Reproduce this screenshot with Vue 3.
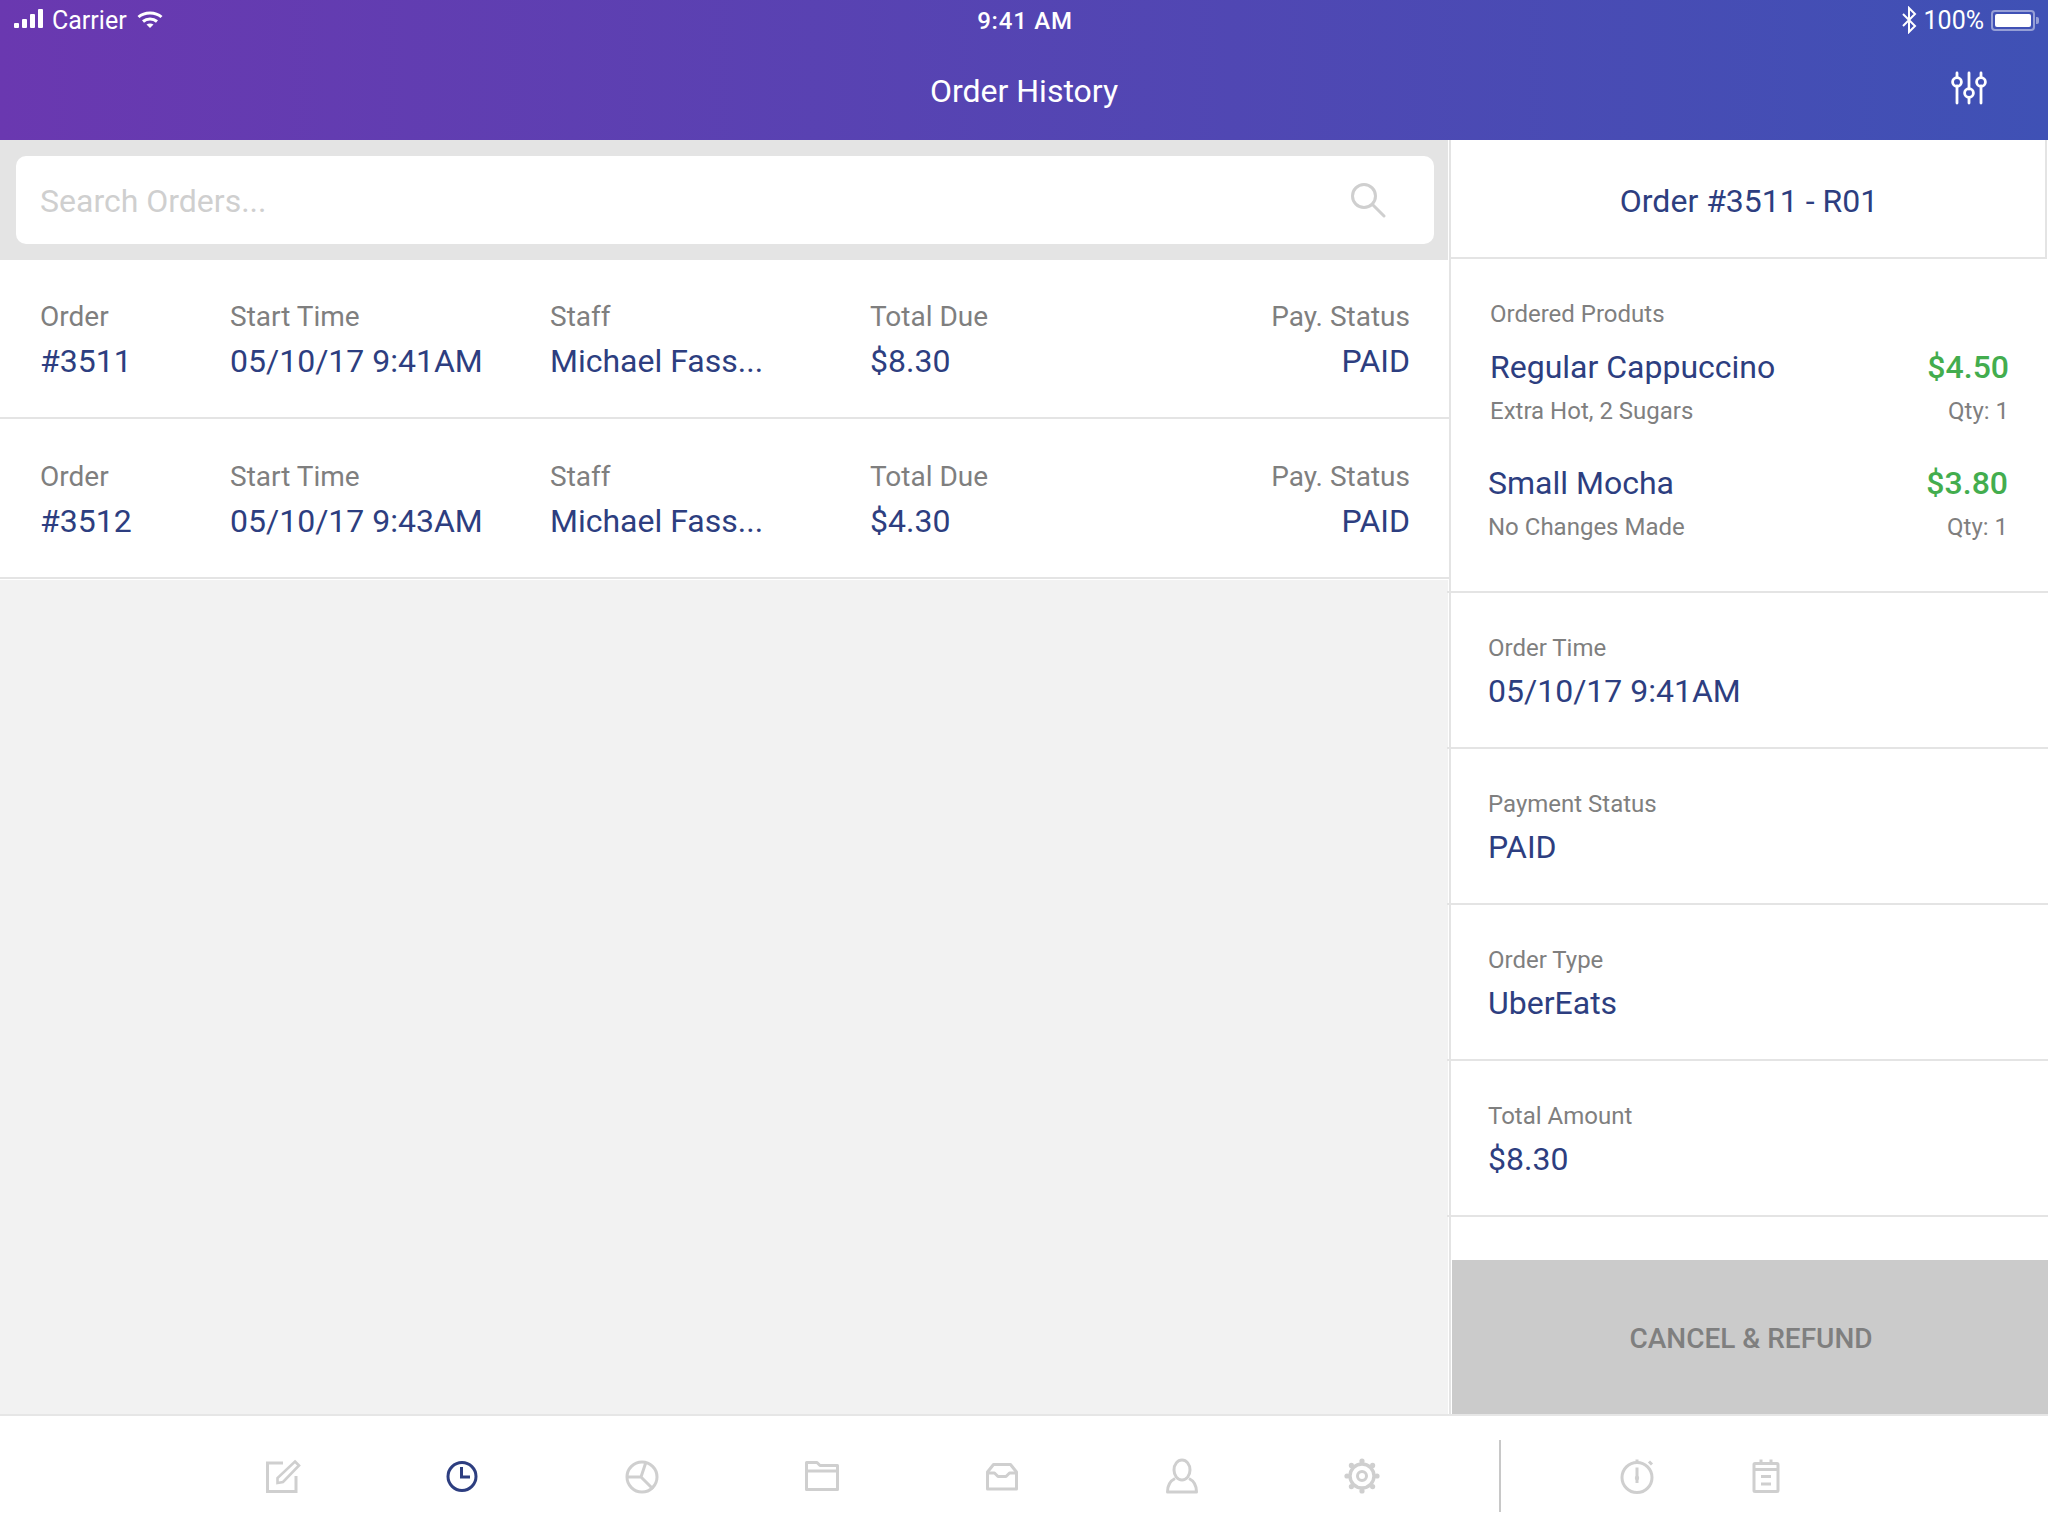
<script setup>
const orders = [
  { id: '#3511', time: '05/10/17 9:41AM', staff: 'Michael Fass...', total: '$8.30', status: 'PAID' },
  { id: '#3512', time: '05/10/17 9:43AM', staff: 'Michael Fass...', total: '$4.30', status: 'PAID' }
]
const products = [
  { name: 'Regular Cappuccino', price: '$4.50', note: 'Extra Hot, 2 Sugars', qty: 'Qty: 1', cls: 'first' },
  { name: 'Small Mocha', price: '$3.80', note: 'No Changes Made', qty: 'Qty: 1', cls: 'second' }
]
const facts = [
  { label: 'Order Time', value: '05/10/17 9:41AM' },
  { label: 'Payment Status', value: 'PAID' },
  { label: 'Order Type', value: 'UberEats' },
  { label: 'Total Amount', value: '$8.30' }
]
</script>

<template>
  <div class="screen">
    <header class="top">
      <div class="status">
        <div class="status-left">
          <svg class="signal" width="30" height="20" viewBox="0 0 30 20" fill="#fff">
            <rect x="0" y="14" width="5" height="5" rx="1" />
            <rect x="8" y="10" width="5" height="9" rx="1" />
            <rect x="16" y="5" width="5" height="14" rx="1" />
            <rect x="24" y="0" width="5" height="19" rx="1" />
          </svg>
          <span class="carrier">Carrier</span>
          <svg class="wifi" width="26" height="18" viewBox="0 0 26 18" fill="none" stroke="#fff" stroke-width="3">
            <path d="M1.5 6 C7.5 .5 18.5 .5 24.5 6" />
            <path d="M6 10.5 C10 7 16 7 20 10.5" />
            <path d="M9.5 13.5 L13 17 L16.5 13.5 C14.5 12 11.5 12 9.5 13.5 Z" fill="#fff" stroke="none" />
          </svg>
        </div>
        <div class="clock">9:41 AM</div>
        <div class="status-right">
          <svg width="16" height="28" viewBox="0 0 16 28" fill="none" stroke="#fff" stroke-width="2">
            <path d="M2 8 L14 20 L8 26 V2 L14 8 L2 20" />
          </svg>
          <span class="pct">100%</span>
          <div class="battery"><div class="battery-fill"></div></div>
          <div class="battery-tip"></div>
        </div>
      </div>
      <div class="titlebar">
        <h1 class="title">Order History</h1>
        <svg class="filter" width="38" height="34" viewBox="0 0 38 34" fill="none" stroke="#fff" stroke-width="2.8" stroke-linecap="round">
          <path d="M7 2 V6 M7 15 V32 M19 2 V18 M19 27 V32 M31 2 V6 M31 15 V32" />
          <circle cx="7" cy="11" r="4.4" />
          <circle cx="19" cy="22" r="4.4" />
          <circle cx="31" cy="11" r="4.4" />
        </svg>
      </div>
    </header>

    <main class="body">
      <section class="list">
        <div class="search-band">
          <div class="search-box">
            <span class="placeholder">Search Orders...</span>
            <svg width="38" height="38" viewBox="0 0 38 38" fill="none" stroke="#cfcfcf" stroke-width="3" stroke-linecap="round">
              <circle cx="16" cy="15" r="11.5" />
              <path d="M24.5 23.5 L36 35" />
            </svg>
          </div>
        </div>
        <div class="rows">
          <div v-for="o in orders" :key="o.id" class="row">
            <div class="cell"><span class="lbl">Order</span><span class="val">{{ o.id }}</span></div>
            <div class="cell"><span class="lbl">Start Time</span><span class="val">{{ o.time }}</span></div>
            <div class="cell"><span class="lbl">Staff</span><span class="val">{{ o.staff }}</span></div>
            <div class="cell"><span class="lbl">Total Due</span><span class="val">{{ o.total }}</span></div>
            <div class="cell end"><span class="lbl">Pay. Status</span><span class="val">{{ o.status }}</span></div>
          </div>
        </div>
        <div class="fill"></div>
      </section>

      <aside class="detail">
        <div class="detail-head">Order #3511 - R01</div>
        <div class="products">
          <div class="products-title">Ordered Produts</div>
          <div v-for="p in products" :key="p.name" class="product" :class="p.cls">
            <div class="pline"><span class="pname">{{ p.name }}</span><span class="pprice">{{ p.price }}</span></div>
            <div class="pline sub"><span>{{ p.note }}</span><span>{{ p.qty }}</span></div>
          </div>
        </div>
        <div v-for="f in facts" :key="f.label" class="fact">
          <span class="lbl small">{{ f.label }}</span>
          <span class="val">{{ f.value }}</span>
        </div>
        <div class="spacer"></div>
        <button class="refund">CANCEL &amp; REFUND</button>
      </aside>
    </main>

    <nav class="tabs">
      <div class="tab">
        <svg width="40" height="40" viewBox="0 0 40 40" fill="none" stroke="#cfcfcf" stroke-width="3">
          <path d="M21 7 H5.5 V35.5 H34 V20" />
          <path d="M33 5.5 L37 9.5 L21 26 L15.5 27 L15.5 22 Z" stroke-width="2.6" />
        </svg>
      </div>
      <div class="tab">
        <svg width="40" height="40" viewBox="0 0 40 40" fill="none" stroke="#2d3e80" stroke-width="3">
          <circle cx="20" cy="20.5" r="14" />
          <path d="M19.5 11 V21 H28" />
        </svg>
      </div>
      <div class="tab">
        <svg width="40" height="40" viewBox="0 0 40 40" fill="none" stroke="#cfcfcf" stroke-width="3">
          <circle cx="20" cy="21" r="15" />
          <path d="M5 21 H19 L24 6 M19 21 L31 33" />
        </svg>
      </div>
      <div class="tab">
        <svg width="40" height="40" viewBox="0 0 40 40" fill="none" stroke="#cfcfcf" stroke-width="3" stroke-linejoin="round">
          <path d="M4.5 6.5 H15 L18 9.5 H35.5 V33.5 H4.5 Z" />
          <path d="M4.5 15 H35.5" />
        </svg>
      </div>
      <div class="tab">
        <svg width="40" height="40" viewBox="0 0 40 40" fill="none" stroke="#cfcfcf" stroke-width="3" stroke-linejoin="round">
          <path d="M5.5 16 L11.5 8.5 H28.5 L34.5 16 V33 H5.5 Z" />
          <path d="M5.5 17 H12.5 L16 20.5 H24 L27.5 17 H34.5" />
        </svg>
      </div>
      <div class="tab">
        <svg width="40" height="40" viewBox="0 0 40 40" fill="none" stroke="#cfcfcf" stroke-width="3" stroke-linejoin="round">
          <ellipse cx="20" cy="14" rx="8" ry="10" />
          <path d="M13 22.5 C8 25 5.5 29 5.5 36 H34.5 C34.5 29 32 25 27 22.5" />
        </svg>
      </div>
      <div class="tab">
        <svg width="40" height="40" viewBox="0 0 40 40" fill="none" stroke="#cfcfcf" stroke-width="3.4">
          <circle cx="20" cy="20" r="12" />
          <circle cx="20" cy="20" r="4.5" stroke-width="3" />
          <g fill="#cfcfcf" stroke="none">
            <circle cx="20" cy="5" r="2.6" /><circle cx="20" cy="35" r="2.6" />
            <circle cx="5" cy="20" r="2.6" /><circle cx="35" cy="20" r="2.6" />
            <circle cx="9.4" cy="9.4" r="2.6" /><circle cx="30.6" cy="9.4" r="2.6" />
            <circle cx="9.4" cy="30.6" r="2.6" /><circle cx="30.6" cy="30.6" r="2.6" />
          </g>
        </svg>
      </div>
      <div class="divider"></div>
      <div class="tab small-tab watch">
        <svg width="40" height="40" viewBox="0 0 40 40" fill="none" stroke="#cfcfcf" stroke-width="3">
          <circle cx="20" cy="21.5" r="15" />
          <path d="M20 11.5 V27 M20 3.5 V6 M32 5.5 L35 8.5" />
          <circle cx="20" cy="22" r="2.2" fill="#cfcfcf" stroke="none" />
        </svg>
      </div>
      <div class="tab small-tab">
        <svg width="40" height="40" viewBox="0 0 40 40" fill="none" stroke="#cfcfcf" stroke-width="3">
          <rect x="8" y="7.5" width="24" height="28" rx="1" />
          <path d="M8 13.5 H32 M15 3.5 V9 M25 3.5 V9" />
          <path d="M15 20.5 H25 M15 28 H25" />
        </svg>
      </div>
    </nav>
  </div>
</template>

<style>
html, body { margin: 0; padding: 0; }
</style>

<style scoped>
.screen {
  width: 2048px;
  height: 1536px;
  display: flex;
  flex-direction: column;
  font-family: Roboto, "Liberation Sans", sans-serif;
  background: #fff;
  overflow: hidden;
}
.top {
  height: 140px;
  flex: none;
  background: linear-gradient(90deg, #6a38b0 0%, #3f51b5 100%);
  color: #fff;
  display: flex;
  flex-direction: column;
}
.status {
  height: 40px;
  display: grid;
  grid-template-columns: 1fr auto 1fr;
  align-items: center;
  padding: 0 9px 0 14px;
  font-size: 25px;
}
.status-left { display: flex; align-items: center; }
.signal { margin-top: -2px; }
.carrier { margin-left: 8px; }
.wifi { margin-left: 10px; margin-top: -1px; }
.clock { font-weight: 500; font-size: 24px; letter-spacing: 0.8px; padding-top: 2px; margin-left: -3px; }
.status-right { display: flex; align-items: center; justify-content: flex-end; }
.pct { margin-left: 7px; font-size: 25px; }
.battery {
  margin-left: 7px;
  width: 44px;
  height: 21px;
  box-sizing: border-box;
  border: 2px solid rgba(255,255,255,.45);
  border-radius: 4px;
  padding: 2px;
}
.battery-fill { width: 100%; height: 100%; background: #fff; border-radius: 2px; }
.battery-tip { width: 3px; height: 7px; margin-left: 1px; background: rgba(255,255,255,.45); border-radius: 0 2px 2px 0; }
.titlebar {
  flex: 1;
  position: relative;
  display: flex;
  align-items: center;
  justify-content: center;
}
.title { margin: 2px 0 0; font-size: 32px; font-weight: 400; line-height: 40px; }
.filter { position: absolute; right: 60px; top: 31px; }
.body { flex: 1; min-height: 0; display: flex; }
.list {
  width: 1451px;
  flex: none;
  background: #fff;
  box-sizing: border-box;
  border-right: 2px solid #e4e4e4;
  display: flex;
  flex-direction: column;
}
.search-band {
  height: 120px;
  flex: none;
  box-sizing: border-box;
  background: #e4e4e4;
  padding: 16px 14px 16px 16px;
  margin-right: 1px;
}
.search-box {
  height: 88px;
  background: #fff;
  border-radius: 10px;
  display: flex;
  align-items: center;
  justify-content: space-between;
  padding: 0 48px 0 24px;
}
.placeholder { font-size: 32px; color: #cfcfcf; padding-top: 2px; }
.rows { flex: none; padding-bottom: 1px; }
.row {
  height: 160px;
  box-sizing: border-box;
  background: #fff;
  border-bottom: 2px solid #e4e4e4;
  display: grid;
  grid-template-columns: 190px 320px 320px 1fr auto;
  padding: 39px 39px 0 40px;
}
.row:first-child { height: 159px; padding-top: 38px; }
.fill { flex: 1; background: #f2f2f2; margin-right: 1px; }
.cell { display: flex; flex-direction: column; }
.cell.end { align-items: flex-end; }
.lbl { font-size: 28px; line-height: 38px; color: #7f7f7f; }
.lbl.small { font-size: 24px; line-height: 36px; }
.val { font-size: 32px; line-height: 50px; color: #2d3e80; white-space: nowrap; }
.detail {
  flex: 1;
  min-width: 0;
  display: flex;
  flex-direction: column;
  background: #fff;
}
.detail-head {
  height: 119px;
  flex: none;
  box-sizing: border-box;
  border-bottom: 2px solid #e4e4e4;
  border-right: 2px solid #e4e4e4;
  margin-right: 1px;
  padding: 4px 0 0 2px;
  display: flex;
  align-items: center;
  justify-content: center;
  font-size: 32px;
  color: #2d3e80;
}
.products {
  height: 334px;
  flex: none;
  box-sizing: border-box;
  border-bottom: 2px solid #e4e4e4;
  margin-left: -4px;
  padding: 38px 40px 0 41px;
}
.products-title { font-size: 24px; line-height: 34px; color: #7f7f7f; padding-left: 2px; }
.product { display: flex; flex-direction: column; }
.product.first { padding: 14px 0 0 2px; margin-right: -1px; }
.product.second { padding-top: 30px; }
.pline { display: flex; justify-content: space-between; align-items: center; }
.pname { font-size: 32px; line-height: 44px; color: #2d3e80; }
.pprice { font-size: 32px; line-height: 44px; color: #43ad4e; font-weight: 500; }
.sub { font-size: 24px; line-height: 40px; color: #7f7f7f; margin-top: 2px; }
.fact {
  height: 156px;
  flex: none;
  box-sizing: border-box;
  border-bottom: 2px solid #e4e4e4;
  margin-left: -4px;
  padding: 37px 0 0 41px;
  display: flex;
  flex-direction: column;
}
.spacer { flex: 1; }
.refund {
  height: 154px;
  flex: none;
  border: 0;
  background: #cbcbcb;
  color: #7f7f7f;
  font: 500 28px Roboto, "Liberation Sans", sans-serif;
  margin-left: 1px;
  padding: 2px 0 0 2px;
}
.tabs {
  height: 122px;
  flex: none;
  box-sizing: border-box;
  border-top: 2px solid #e6e6e6;
  display: flex;
  align-items: center;
  padding-left: 192px;
}
.tab { width: 180px; flex: none; display: flex; justify-content: center; }
.tab svg { display: block; }
.divider { width: 2px; height: 72px; background: #c8c8c8; margin-left: 47px; }
.small-tab { width: 40px; }
.watch { margin-left: 116px; margin-right: 89px; }
</style>
